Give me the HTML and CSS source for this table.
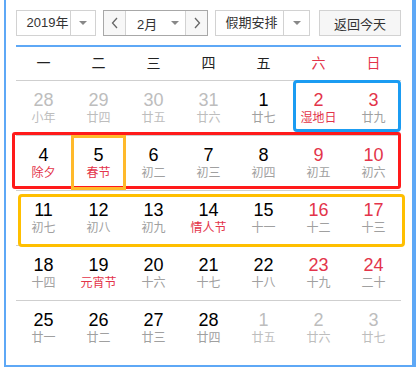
FILE: index.html
```html
<!DOCTYPE html>
<html lang="zh-CN">
<head>
<meta charset="utf-8">
<title>日历</title>
<link rel="stylesheet" href="styles.css">
</head>
<body>
<div class="cal">
  <div class="toolbar">
    <div class="sel year"><span class="val">2019年</span><span class="drop"><i class="tri"></i></span></div>
    <div class="month">
      <span class="nav prev"><svg width="8" height="12" viewBox="0 0 8 12"><polyline points="6,1 1.5,6 6,11" fill="none" stroke="#666" stroke-width="1.3"/></svg></span>
      <span class="mval"><span class="mtxt">2月</span><i class="tri"></i></span>
      <span class="nav next"><svg width="8" height="12" viewBox="0 0 8 12"><polyline points="2,1 6.5,6 2,11" fill="none" stroke="#666" stroke-width="1.3"/></svg></span>
    </div>
    <div class="sel hol"><span class="val">假期安排</span><span class="drop"><i class="tri"></i></span></div>
    <span class="today">返回今天</span>
  </div>
  <div class="week">
    <span>一</span><span>二</span><span>三</span><span>四</span><span>五</span><span class="we">六</span><span class="we">日</span>
  </div>
  <div class="grid">
    <div class="cell other"><b>28</b><i>小年</i></div>
    <div class="cell other"><b>29</b><i>廿四</i></div>
    <div class="cell other"><b>30</b><i>廿五</i></div>
    <div class="cell other"><b>31</b><i>廿六</i></div>
    <div class="cell"><b>1</b><i>廿七</i></div>
    <div class="cell red"><b>2</b><i class="fest">湿地日</i></div>
    <div class="cell red"><b>3</b><i>廿九</i></div>

    <div class="cell"><b>4</b><i class="fest">除夕</i></div>
    <div class="cell"><b>5</b><i class="fest">春节</i></div>
    <div class="cell"><b>6</b><i>初二</i></div>
    <div class="cell"><b>7</b><i>初三</i></div>
    <div class="cell"><b>8</b><i>初四</i></div>
    <div class="cell red"><b>9</b><i>初五</i></div>
    <div class="cell red"><b>10</b><i>初六</i></div>

    <div class="cell"><b>11</b><i>初七</i></div>
    <div class="cell"><b>12</b><i>初八</i></div>
    <div class="cell"><b>13</b><i>初九</i></div>
    <div class="cell"><b>14</b><i class="fest">情人节</i></div>
    <div class="cell"><b>15</b><i>十一</i></div>
    <div class="cell red"><b>16</b><i>十二</i></div>
    <div class="cell red"><b>17</b><i>十三</i></div>

    <div class="cell"><b>18</b><i>十四</i></div>
    <div class="cell"><b>19</b><i class="fest">元宵节</i></div>
    <div class="cell"><b>20</b><i>十六</i></div>
    <div class="cell"><b>21</b><i>十七</i></div>
    <div class="cell"><b>22</b><i>十八</i></div>
    <div class="cell red"><b>23</b><i>十九</i></div>
    <div class="cell red"><b>24</b><i>二十</i></div>

    <div class="cell"><b>25</b><i>廿一</i></div>
    <div class="cell"><b>26</b><i>廿二</i></div>
    <div class="cell"><b>27</b><i>廿三</i></div>
    <div class="cell"><b>28</b><i>廿四</i></div>
    <div class="cell other"><b>1</b><i>廿五</i></div>
    <div class="cell other"><b>2</b><i>廿六</i></div>
    <div class="cell other"><b>3</b><i>廿七</i></div>

    <div class="mark mark-blue"></div>
    <div class="mark mark-red"></div>
    <div class="mark mark-orange"></div>
    <div class="mark mark-yellow"></div>
  </div>
</div>
</body>
</html>
```
FILE: styles.css
```css
html, body {
  margin: 0;
  padding: 0;
  background: #fff;
}
body {
  font-family: "Liberation Sans", "Noto Sans CJK SC", sans-serif;
  color: #000;
}
.cal {
  margin-left: 4px;
  border-left: 2px solid #5ea8f6;
  border-right: 4px solid #5ea8f6;
  border-bottom: 2px solid #5ea8f6;
  padding: 0 11px 10px 10px;
  width: 385px;
}
.toolbar {
  display: flex;
  gap: 7px;
  padding: 10px 0 9px;
  border-bottom: 2px solid #5ea8f6;
  font-size: 13px;
  color: #333;
}
.sel, .month, .today {
  box-sizing: border-box;
  height: 26px;
  display: flex;
  align-items: center;
}
.sel {
  border: 1px solid #d2d2d2;
  background: #fff;
}
.year { width: 80px; }
.hol { width: 95px; }
.sel .val {
  flex: 1;
  text-align: center;
  line-height: 24px;
}
.year .val { padding-left: 8px; }
.hol .val { padding-left: 4px; }
.sel .drop {
  width: 24px;
  height: 24px;
  border-left: 1px solid #d2d2d2;
  display: flex;
  align-items: center;
  justify-content: center;
}
.hol .drop { width: 25px; }
.tri {
  width: 0;
  height: 0;
  border-left: 4px solid transparent;
  border-right: 4px solid transparent;
  border-top: 4px solid #888;
}
.month {
  width: 105px;
  border: 1px solid #a8a8a8;
}
.nav {
  width: 21px;
  height: 24px;
  background: #f7f7f7;
  display: flex;
  align-items: center;
  justify-content: center;
}
.prev { border-right: 1px solid #d2d2d2; }
.next { border-left: 1px solid #d2d2d2; }
.mval {
  flex: 1;
  height: 24px;
  display: flex;
  align-items: center;
  padding-left: 11px;
}
.mtxt { width: 34px; }
.today {
  margin-left: auto;
  width: 82px;
  justify-content: center;
  border: 1px solid #d2d2d2;
  background: #f6f6f6;
}
.week {
  display: grid;
  grid-template-columns: repeat(7, 55px);
  height: 33px;
  line-height: 33px;
  font-size: 14px;
  text-align: center;
  color: #222;
}
.week .we { color: #e3344a; }
.grid {
  position: relative;
  display: grid;
  grid-template-columns: repeat(7, 55px);
  grid-auto-rows: 55px;
}
.cell {
  box-sizing: border-box;
  border-top: 1px solid #cfcfcf;
  padding-top: 9px;
  text-align: center;
}
.cell b {
  display: block;
  font-weight: normal;
  font-size: 18px;
  line-height: 20px;
  color: #000;
}
.cell i {
  display: block;
  font-style: normal;
  font-size: 12px;
  line-height: 17px;
  color: #a0a0a0;
}
.cell.red b { color: #e3344a; }
.cell i.fest { color: #e3344a; }
.cell.other b, .cell.other i { color: #bdbdbd; }
.mark {
  position: absolute;
  box-sizing: border-box;
  border: 3px solid;
}
.mark-blue {
  left: 277px; top: 0; width: 108px; height: 52px;
  border-color: #1b9cf2;
  border-radius: 4px;
}
.mark-red {
  left: -4px; top: 52px; width: 389px; height: 57px;
  border-color: #ff1a1a;
  border-radius: 3px;
}
.mark-orange {
  left: 55px; top: 55px; width: 55px; height: 55px;
  border-color: #ffb92a;
}
.mark-yellow {
  left: 2px; top: 114px; width: 387px; height: 53px;
  border-color: #ffbf00;
  border-radius: 4px;
}
```
